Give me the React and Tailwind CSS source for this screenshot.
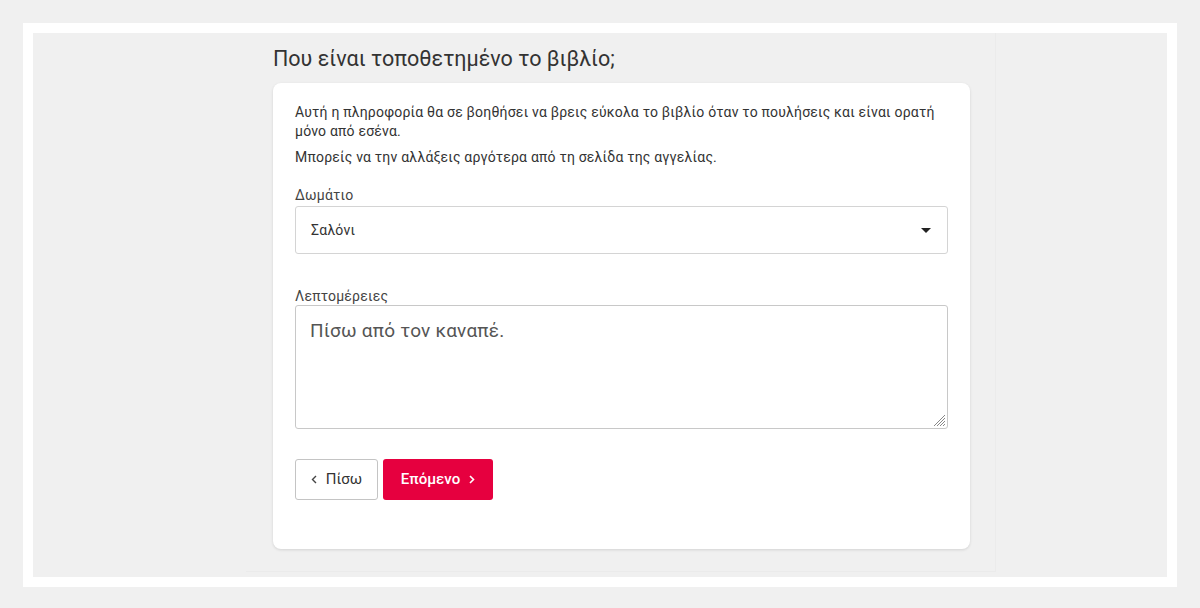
import React from "react";

export default function App() {
  return (
    <div className="min-h-[608px] bg-[#f0f0f0] p-[23px]" style={{ fontFamily: "Roboto, 'Noto Sans', sans-serif" }}>
      <div className="bg-white p-[10px]">
        <div className="bg-[#f0f0f0] h-[544px] pl-[213px] pb-[5px]">
          <div className="w-[750px] h-full border-r border-b border-[#ebebeb] pl-[27px] pt-[12px]">
            <h1 className="text-[21.5px] leading-[28px] text-[#333] font-normal">Που είναι τοποθετημένο το βιβλίο;</h1>
            <div className="mt-[10px] w-[697px] bg-white rounded-lg shadow-[0_1px_3px_rgba(0,0,0,0.12)] pt-[20px] px-[22px] pb-[49px] text-[#333]">
              <p className="text-[14px] leading-[19px] tracking-[0.2px]">
                Αυτή η πληροφορία θα σε βοηθήσει να βρεις εύκολα το βιβλίο όταν το πουλήσεις και είναι ορατή μόνο από εσένα.
              </p>
              <p className="text-[14px] leading-[19px] mt-[7px] tracking-[0.2px]">Μπορείς να την αλλάξεις αργότερα από τη σελίδα της αγγελίας.</p>

              <label className="block mt-[20px] text-[14px] leading-[17px] text-[#444] tracking-[0.2px]">Δωμάτιο</label>
              <div className="mt-[2px] h-[48px] border border-[#d4d4d4] rounded-[3px] flex items-center justify-between pl-[15px] pr-[16px]">
                <span className="text-[14px] text-[#333] tracking-[0.2px]">Σαλόνι</span>
                <svg width="10" height="5" viewBox="0 0 10 5"><path d="M0 0h10L5 5z" fill="#222" /></svg>
              </div>

              <label className="block mt-[34px] text-[14px] leading-[17px] text-[#444] tracking-[0.2px]">Λεπτομέρειες</label>
              <div className="relative h-[124px] border border-[#c8c8c8] rounded-[3px] pl-[14px] pt-[12px]">
                <span className="text-[19px] leading-[26px] text-[#555] tracking-[0.2px]">Πίσω από τον καναπέ.</span>
                <svg className="absolute right-[1px] bottom-[1px]" width="12" height="12" viewBox="0 0 12 12">
                  <path d="M11 3L3 11M11 6L6 11M11 9L9 11M11 0L0 11" stroke="#888" strokeWidth="1" />
                </svg>
              </div>

              <div className="mt-[30px] flex gap-[5px]">
                <button className="h-[41px] w-[83px] border border-[#c4c4c4] rounded-[3px] bg-white flex items-center justify-center gap-[9px] text-[15px] text-[#333]">
                  <svg width="6" height="9" viewBox="0 0 6 9"><path d="M5 1L1.5 4.5L5 8" fill="none" stroke="#444" strokeWidth="1.4" /></svg>
                  <span>Πίσω</span>
                </button>
                <button className="h-[41px] w-[110px] rounded-[3px] bg-[#e6003f] flex items-center justify-center gap-[9px] text-[15px] font-medium text-white">
                  <span>Επόμενο</span>
                  <svg width="6" height="9" viewBox="0 0 6 9"><path d="M1 1L4.5 4.5L1 8" fill="none" stroke="#fff" strokeWidth="1.6" /></svg>
                </button>
              </div>
            </div>
          </div>
        </div>
      </div>
    </div>
  );
}
